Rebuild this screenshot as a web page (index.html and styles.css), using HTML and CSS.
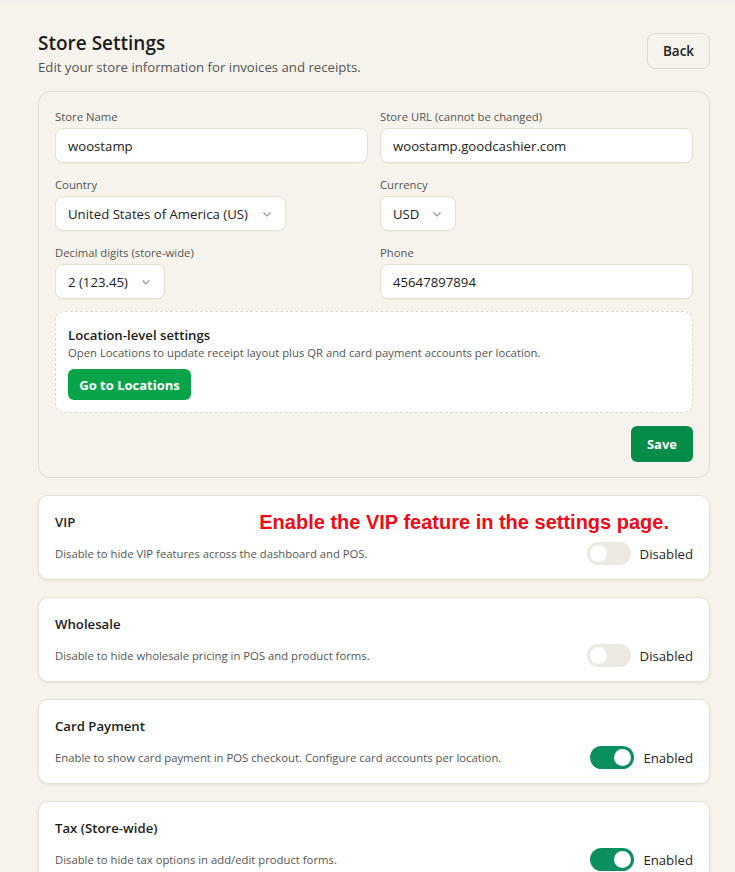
FILE: index.html
```html
<!DOCTYPE html>
<html lang="en">
<head>
<meta charset="utf-8">
<title>Store Settings</title>
<link rel="stylesheet" href="styles.css">
</head>
<body>
<div class="topstrip"></div>
<main class="page">
  <header class="page-head">
    <div>
      <h1 class="title">Store Settings</h1>
      <p class="subtitle">Edit your store information for invoices and receipts.</p>
    </div>
    <button class="btn-back">Back</button>
  </header>

  <section class="form-card">
    <div class="grid">
      <div class="field">
        <label class="label">Store Name</label>
        <div class="input">woostamp</div>
      </div>
      <div class="field">
        <label class="label">Store URL (cannot be changed)</label>
        <div class="input">woostamp.goodcashier.com</div>
      </div>
      <div class="field">
        <label class="label">Country</label>
        <div class="select select-country">United States of America (US)<svg class="chev" viewBox="0 0 12 12"><path d="M2.5 4.5 6 8l3.5-3.5"/></svg></div>
      </div>
      <div class="field">
        <label class="label">Currency</label>
        <div class="select select-currency">USD<svg class="chev" viewBox="0 0 12 12"><path d="M2.5 4.5 6 8l3.5-3.5"/></svg></div>
      </div>
      <div class="field">
        <label class="label">Decimal digits (store-wide)</label>
        <div class="select select-decimal">2 (123.45)<svg class="chev" viewBox="0 0 12 12"><path d="M2.5 4.5 6 8l3.5-3.5"/></svg></div>
      </div>
      <div class="field">
        <label class="label">Phone</label>
        <div class="input">45647897894</div>
      </div>
    </div>

    <div class="loc-box">
      <div class="loc-title">Location-level settings</div>
      <div class="loc-desc">Open Locations to update receipt layout plus QR and card payment accounts per location.</div>
      <button class="btn-loc">Go to Locations</button>
    </div>

    <div class="save-row">
      <button class="btn-save">Save</button>
    </div>
  </section>

  <section class="toggle-card">
    <div class="tc-head">
      <div class="tc-title">VIP</div>
      <div class="note">Enable the VIP feature in the settings page.</div>
    </div>
    <div class="tc-row">
      <div class="tc-desc">Disable to hide VIP features across the dashboard and POS.</div>
      <div class="switch-wrap"><span class="switch"><span class="knob"></span></span><span class="switch-label">Disabled</span></div>
    </div>
  </section>

  <section class="toggle-card">
    <div class="tc-head">
      <div class="tc-title">Wholesale</div>
    </div>
    <div class="tc-row">
      <div class="tc-desc">Disable to hide wholesale pricing in POS and product forms.</div>
      <div class="switch-wrap"><span class="switch"><span class="knob"></span></span><span class="switch-label">Disabled</span></div>
    </div>
  </section>

  <section class="toggle-card">
    <div class="tc-head">
      <div class="tc-title">Card Payment</div>
    </div>
    <div class="tc-row">
      <div class="tc-desc">Enable to show card payment in POS checkout. Configure card accounts per location.</div>
      <div class="switch-wrap"><span class="switch on"><span class="knob"></span></span><span class="switch-label">Enabled</span></div>
    </div>
  </section>

  <section class="toggle-card">
    <div class="tc-head">
      <div class="tc-title">Tax (Store-wide)</div>
    </div>
    <div class="tc-row">
      <div class="tc-desc">Disable to hide tax options in add/edit product forms.</div>
      <div class="switch-wrap"><span class="switch on"><span class="knob"></span></span><span class="switch-label">Enabled</span></div>
    </div>
  </section>
</main>
</body>
</html>
```
FILE: styles.css
```css
* { box-sizing: border-box; }
html, body { margin: 0; padding: 0; }
body {
  background: #f6f3ed;
  font-family: "Open Sans", "Noto Sans", "DejaVu Sans", sans-serif;
  color: #1f1f1f;
  overflow: hidden;
}
.topstrip { height: 4px; background: #f1f1f0; }

.page { width: 672px; margin-left: 38px; padding-top: 26px; }

.page-head { display: flex; justify-content: space-between; align-items: flex-start; }
.title { margin: 0; font-size: 19px; font-weight: 600; line-height: 26px; color: #1c1c1c; }
.subtitle { margin: 2px 0 0; font-size: 13.2px; line-height: 18px; color: #555; }
.btn-back {
  margin-top: 3px;
  width: 63px; height: 36px;
  background: #f6f3ed; border: 1px solid #e1dace; border-radius: 8px;
  font: 600 13.5px "Open Sans", sans-serif; color: #222;
}

.form-card {
  margin-top: 15px;
  border: 1px solid #e3dccf; border-radius: 12px;
  padding: 17px 16px 15px;
}
.grid { display: grid; grid-template-columns: 313px 313px; column-gap: 12px; row-gap: 14px; }
.field { display: flex; flex-direction: column; align-items: flex-start; }
.label { font-size: 11.3px; line-height: 16px; color: #555; margin-bottom: 3px; }
.input, .select {
  height: 35px; width: 100%;
  background: #fff; border: 1px solid #e5dfd4; border-radius: 8px;
  padding: 0 12px; display: flex; align-items: center;
  font-size: 13.2px; color: #222;
  box-shadow: 0 1px 1px rgba(0,0,0,0.03);
}
.select { width: auto; gap: 0; }
.select-country { width: 231px; }
.select-currency { width: 76px; }
.select-decimal { width: 110px; }
.chev { width: 12px; height: 12px; margin-left: auto; fill: none; stroke: #9a9a9a; stroke-width: 1.2; }

.loc-box {
  margin-top: 12px;
  background: #fff; border: 1px dashed #ddd8cf; border-radius: 10px;
  padding: 14px 12px 12px;
}
.loc-title { font-size: 13.2px; font-weight: 600; line-height: 18px; color: #1c1c1c; }
.loc-desc { font-size: 11.3px; line-height: 16px; color: #555; margin-top: 1px; }
.btn-loc {
  margin-top: 8px; height: 31px; width: 123px;
  background: #08a44a; color: #fff; border: 0; border-radius: 6px;
  font: 700 13px "Open Sans", sans-serif;
}

.save-row { display: flex; justify-content: flex-end; margin-top: 13px; }
.btn-save {
  width: 62px; height: 36px;
  background: #058c48; color: #fff; border: 0; border-radius: 6px;
  font: 700 13px "Open Sans", sans-serif;
}

.toggle-card {
  margin-top: 17px;
  background: #fff; border: 1px solid #e6e0d6; border-radius: 10px;
  box-shadow: 0 1px 3px rgba(0,0,0,0.08);
  padding: 15px 16px 14px;
  height: 85px;
}
.tc-head { display: flex; align-items: center; justify-content: space-between; height: 22px; }
.tc-title { font-size: 13.2px; font-weight: 600; color: #1c1c1c; }
.note {
  font-family: "Liberation Sans", Arial, sans-serif;
  font-weight: 700; font-size: 20px; color: #f00a16;
  margin-right: 24px;
}
.tc-row { display: flex; align-items: center; justify-content: space-between; margin-top: 9px; }
.tc-desc { font-size: 11.3px; color: #555; }
.switch-wrap { display: flex; align-items: center; gap: 9px; }
.switch {
  width: 44px; height: 23px; border-radius: 12px;
  background: #ece9e3; position: relative; display: inline-block;
}
.switch .knob {
  position: absolute; top: 3px; left: 3px;
  width: 17px; height: 17px; border-radius: 50%; background: #fff;
}
.switch.on { background: #0b8f5e; }
.switch.on .knob { left: 24px; }
.switch-label { font-size: 13.2px; color: #1f1f1f; }
```
